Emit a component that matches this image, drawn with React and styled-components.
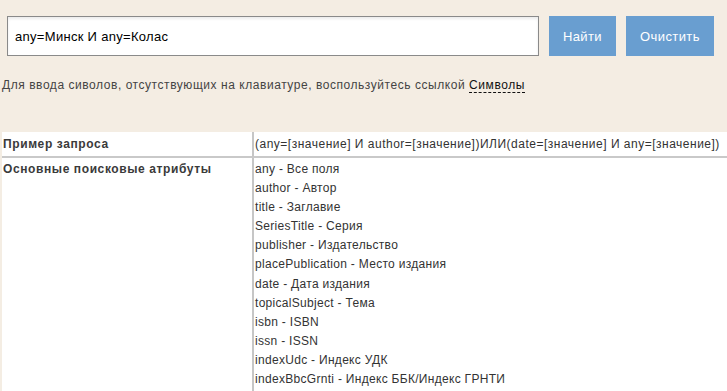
import React from "react";
import styled, { createGlobalStyle } from "styled-components";

const GlobalStyle = createGlobalStyle`
  html, body {
    margin: 0;
    padding: 0;
    background: #f4ede3;
    font-family: "Liberation Sans", Arial, sans-serif;
  }
`;

const Page = styled.div`
  width: 727px;
  height: 391px;
  overflow: hidden;
  background: #f4ede3;
`;

const SearchRow = styled.form`
  display: flex;
  align-items: stretch;
  gap: 10px;
  padding: 16px 0 0 7px;
`;

const QueryInput = styled.input`
  box-sizing: border-box;
  width: 532px;
  height: 40px;
  padding: 0 7px;
  border: 1px solid #8a8a8a;
  box-shadow: inset 0 2px 3px rgba(0, 0, 0, 0.08);
  background: #fff;
  font-family: "Liberation Sans", Arial, sans-serif;
  font-size: 13px;
  letter-spacing: 0.3px;
  color: #000;
  outline: none;
`;

const Button = styled.button`
  box-sizing: border-box;
  width: ${({ $w }) => $w}px;
  height: 40px;
  border: none;
  background: #699ed0;
  color: #fff;
  font-family: "Liberation Sans", Arial, sans-serif;
  font-size: 13px;
  letter-spacing: 0.4px;
  padding: 0;
  cursor: pointer;
`;

const Hint = styled.p`
  margin: 22px 0 0 2px;
  font-size: 12px;
  letter-spacing: 0.55px;
  color: #444;
  line-height: 15px;
`;

const SymbolsLink = styled.a`
  color: #111;
  text-decoration: none;
  border-bottom: 1px dashed #111;
  cursor: pointer;
`;

const Table = styled.div`
  margin: 39px 0 0 2px;
  background: #fff;
  display: grid;
  grid-template-columns: 250px 1fr;
`;

const Label = styled.div`
  padding: ${({ $first }) => ($first ? "5px 0 4px 1px" : "2px 0 0 1px")};
  line-height: ${({ $first }) => ($first ? "15px" : "19.1px")};
  font-size: 12px;
  font-weight: bold;
  letter-spacing: 0.6px;
  color: #3a3a3a;
  border-bottom: ${({ $first }) => ($first ? "2px solid #c9c9c9" : "none")};
`;

const Value = styled.div`
  border-left: 2px solid #c6c6c6;
  padding: ${({ $first }) => ($first ? "5px 0 4px 1px" : "2px 0 2px 1px")};
  line-height: 15px;
  font-size: 12px;
  letter-spacing: 0.5px;
  color: #333;
  white-space: nowrap;
  border-bottom: ${({ $first }) => ($first ? "2px solid #c9c9c9" : "none")};
`;

const Attr = styled.div`
  line-height: 19.1px;
  letter-spacing: 0.3px;
`;

const attributes = [
  "any - Все поля",
  "author - Автор",
  "title - Заглавие",
  "SeriesTitle - Серия",
  "publisher - Издательство",
  "placePublication - Место издания",
  "date - Дата издания",
  "topicalSubject - Тема",
  "isbn - ISBN",
  "issn - ISSN",
  "indexUdc - Индекс УДК",
  "indexBbcGrnti - Индекс ББК/Индекс ГРНТИ",
];

export default function App() {
  return (
    <Page>
      <GlobalStyle />
      <SearchRow onSubmit={(e) => e.preventDefault()}>
        <QueryInput defaultValue="any=Минск И any=Колас" />
        <Button $w={67} type="submit">Найти</Button>
        <Button $w={88} type="button">Очистить</Button>
      </SearchRow>
      <Hint>
        Для ввода сиволов, отсутствующих на клавиатуре, воспользуйтесь ссылкой{" "}
        <SymbolsLink>Символы</SymbolsLink>
      </Hint>
      <Table>
        <Label $first>Пример запроса</Label>
        <Value $first>
          (any=[значение] И author=[значение])ИЛИ(date=[значение] И any=[значение])
        </Value>
        <Label>Основные поисковые атрибуты</Label>
        <Value>
          {attributes.map((a) => (
            <Attr key={a}>{a}</Attr>
          ))}
        </Value>
      </Table>
    </Page>
  );
}
